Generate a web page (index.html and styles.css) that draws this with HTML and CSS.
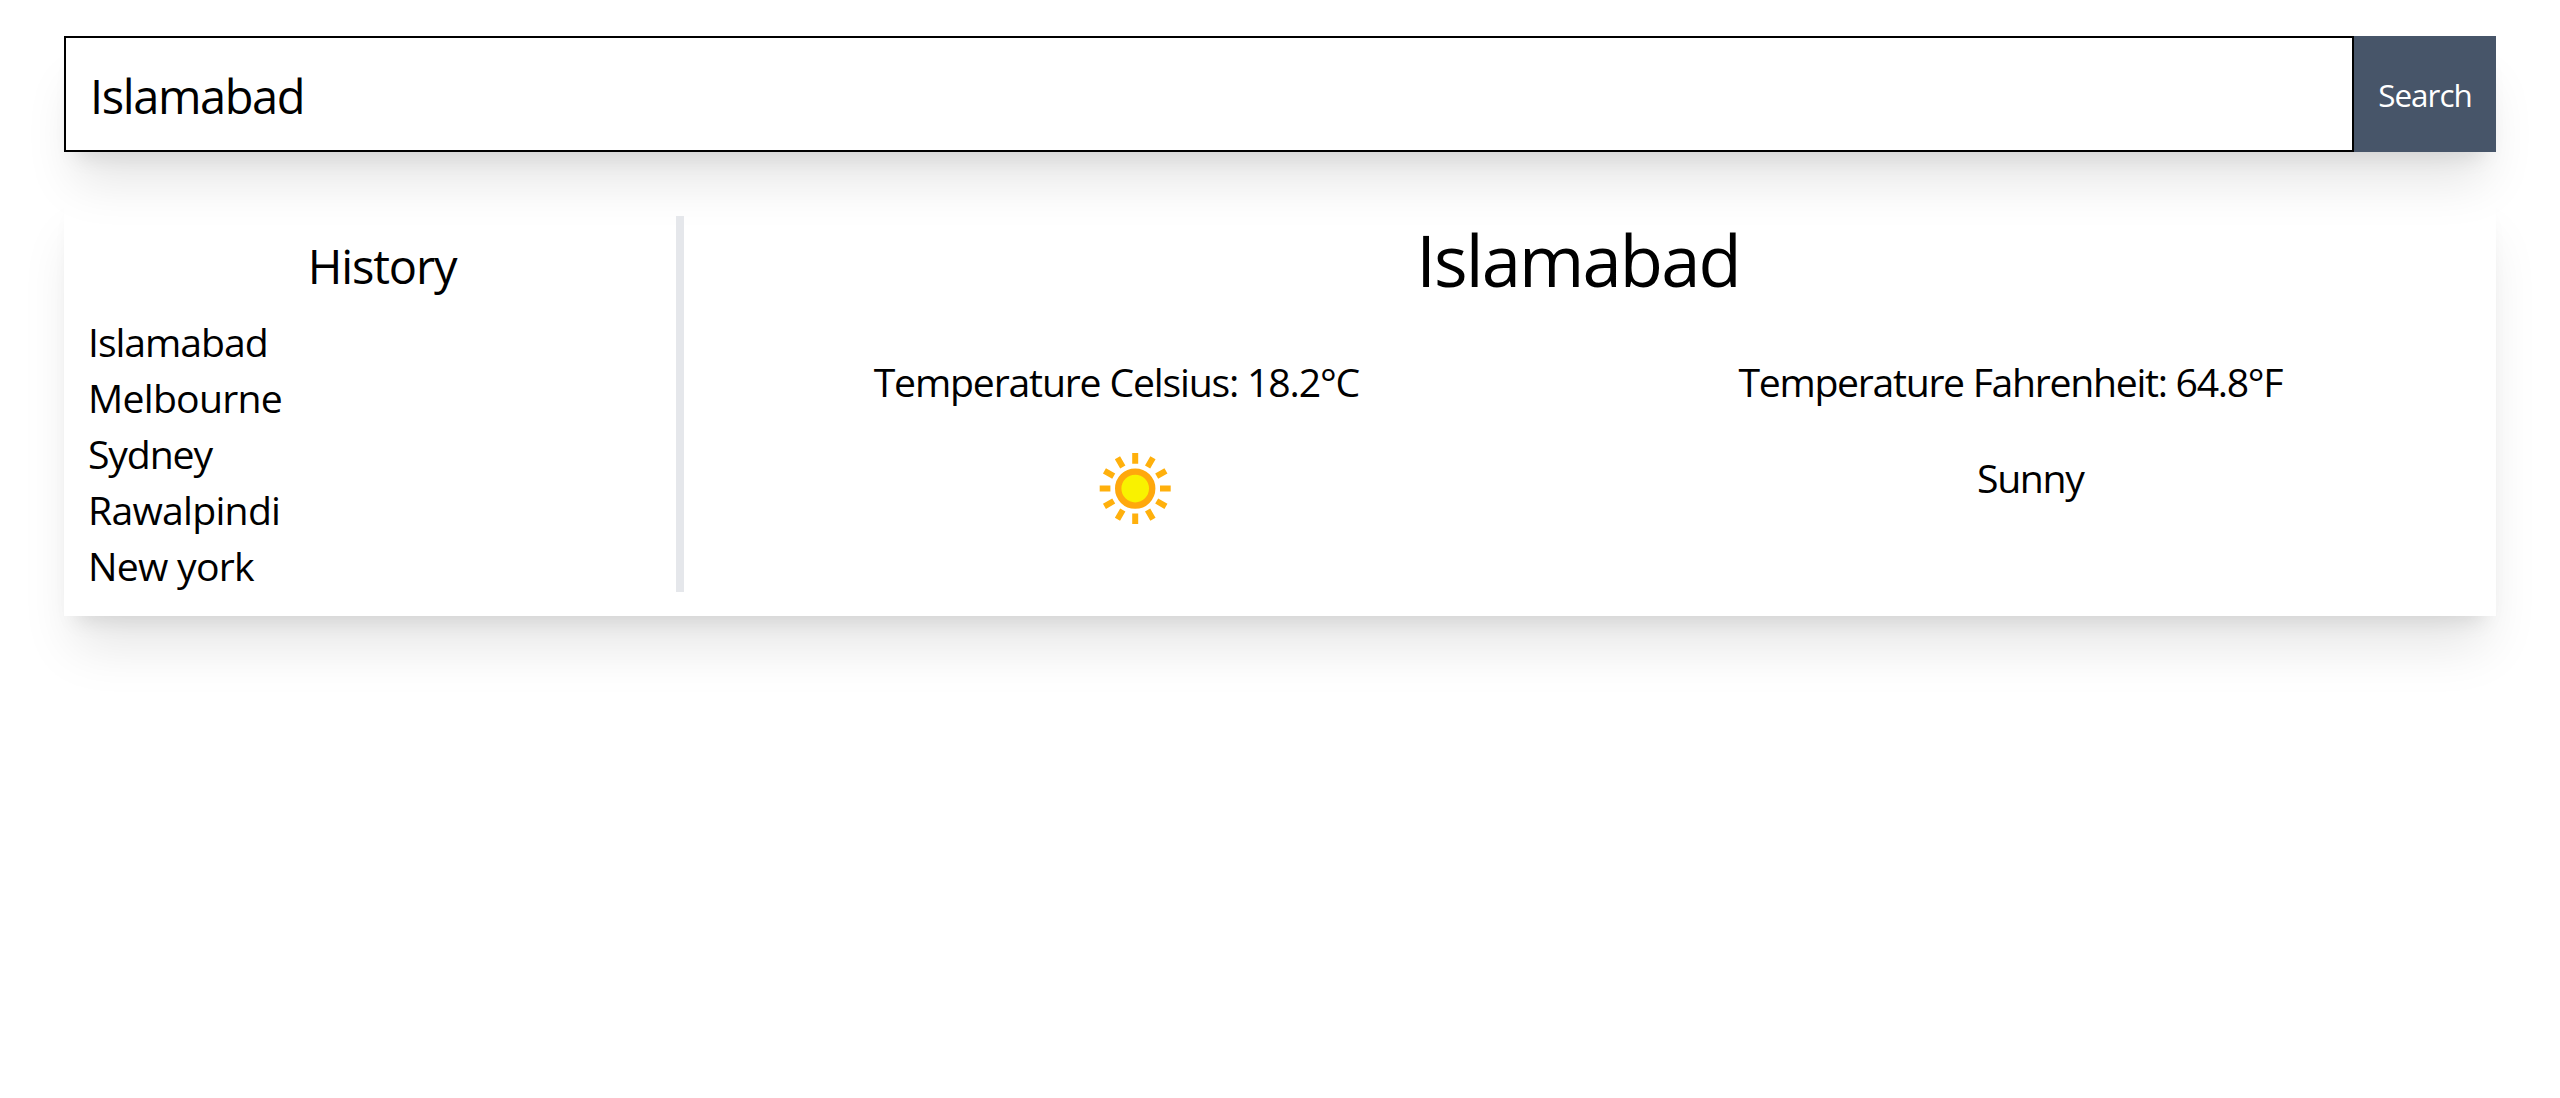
FILE: index.html
```html
<!DOCTYPE html>
<html lang="en">
<head>
  <meta charset="utf-8">
  <title>Weather</title>
  <link rel="stylesheet" href="styles.css">
</head>
<body>
  <main class="page">
    <form class="search">
      <input class="search-input" type="text" value="Islamabad" aria-label="City">
      <button class="search-button" type="button">Search</button>
    </form>

    <section class="card">
      <aside class="history">
        <h2 class="history-title">History</h2>
        <ul class="history-list">
          <li class="tight">Islamabad</li>
          <li class="loose">Melbourne</li>
          <li class="tighter">Sydney</li>
          <li class="loose">Rawalpindi</li>
          <li class="loose">New york</li>
        </ul>
      </aside>

      <div class="weather">
        <h1 class="city">Islamabad</h1>
        <div class="row">
          <p class="celsius">Temperature Celsius: 18.2°C</p>
          <p class="fahrenheit">Temperature Fahrenheit: 64.8°F</p>
        </div>
        <div class="row">
          <svg class="sun" viewBox="0.8 -0.6 128 128" role="img" aria-label="Sunny">
            <g stroke="#ffb00c" stroke-width="6">
              <path d="M64 4.500V15.200M64 64.800V75.500M28.500 40H39.200M88.800 40H99.500"/>
              <path transform="rotate(30 64 40)" d="M64 4.500V15.200M64 64.800V75.500M28.500 40H39.200M88.800 40H99.500"/>
              <path transform="rotate(60 64 40)" d="M64 4.500V15.200M64 64.800V75.500M28.500 40H39.200M88.800 40H99.500"/>
            </g>
            <circle cx="64" cy="40" r="17" fill="#f9f200" stroke="#ffa80c" stroke-width="6.400"/>
          </svg>
          <p class="condition">Sunny</p>
        </div>
      </div>
    </section>
  </main>
</body>
</html>
```
FILE: styles.css
```css
* {
  box-sizing: border-box;
  margin: 0;
  padding: 0;
}

body {
  background: #fff;
  color: #000;
  font-family: "Open Sans", "Noto Sans", sans-serif;
}

.page {
  display: flex;
  flex-direction: column;
  gap: 40px;
  min-height: 100vh;
  padding: 36px 64px;
}

.search,
.card {
  display: flex;
  box-shadow: 0 40px 50px -10px rgba(0, 0, 0, 0.1), 0 16px 20px -12px rgba(0, 0, 0, 0.1);
}

.search-input {
  flex: 1;
  min-width: 0;
  height: 116px;
  padding: 3px 24px 0;
  border: 2px solid #000;
  border-radius: 0;
  outline: none;
  background: #fff;
  color: #000;
  font: 47px "Open Sans", "Noto Sans", sans-serif;
  letter-spacing: -1.4px;
}

.search-button {
  width: 142px;
  padding-top: 1px;
  border: 0;
  background: #475569;
  color: #fff;
  font: 31.4px "Open Sans", "Noto Sans", sans-serif;
  letter-spacing: -0.95px;
}

.card {
  padding: 24px;
}

.history {
  width: 596px;
  border-right: 8px solid #e5e7eb;
}

.history-title {
  height: 64px;
  margin: 16px 0;
  font-size: 47px;
  font-weight: 400;
  line-height: 69px;
  letter-spacing: -1.14px;
  text-align: center;
}

.history-list {
  list-style: none;
}

.history-list li,
.row p {
  height: 56px;
  font-size: 39.2px;
  line-height: 59px;
  white-space: nowrap;
}

.history-list .tight {
  letter-spacing: -1.05px;
}

.history-list .tighter {
  letter-spacing: -1.15px;
}

.history-list .loose {
  letter-spacing: -0.75px;
}

.weather {
  flex: 1;
}

.city {
  height: 80px;
  margin-bottom: 56px;
  font-size: 70.6px;
  font-weight: 400;
  line-height: 88px;
  letter-spacing: -1.9px;
  text-align: center;
}

.row {
  display: flex;
  justify-content: space-around;
}

.row + .row {
  height: 128px;
  margin-top: 40px;
}

.celsius {
  letter-spacing: -1.18px;
}

.fahrenheit {
  letter-spacing: -1.3px;
}

.condition {
  letter-spacing: -1.3px;
}

.sun {
  display: block;
  width: 128px;
  height: 128px;
}
```
